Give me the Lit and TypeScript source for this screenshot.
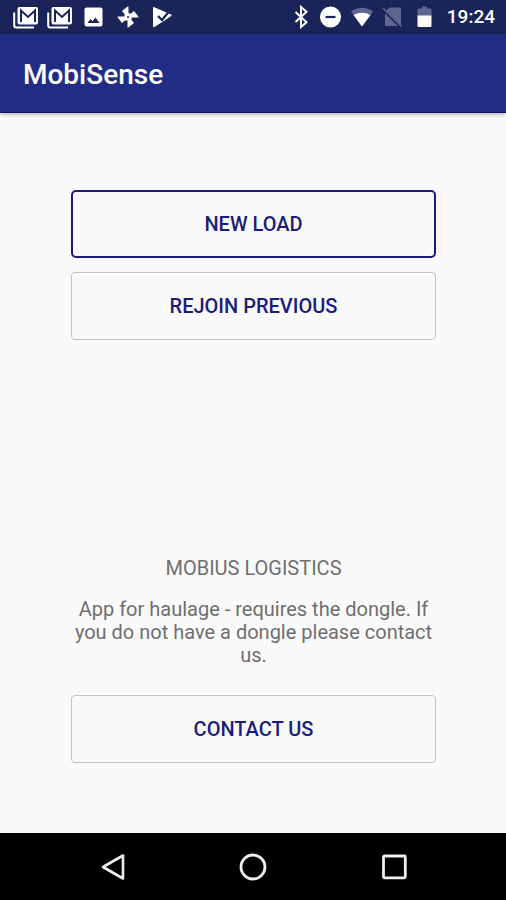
import { LitElement, html, css, svg } from "lit";
import { customElement } from "lit/decorators.js";

const gmailIcon = svg`
  <path d="M1.200 7.500V20.500a2 2 0 0 0 2 2H21" fill="none" stroke="#fff" stroke-width="2"/>
  <rect x="4.500" y="2" width="20.500" height="17.500" rx="2" fill="#fff"/>
  <path d="M8 17V5.500l7 6.500 7-6.500V17" fill="none" stroke="#1b2458" stroke-width="2"/>`;

const blade = "M12.500 12.500V2q0-.800-.800-.400L6.500 5.500q-.500.600 0 1.200L8.500 9V12z";

const icons = {
  image: svg`
    <path fill="#fff" fill-rule="evenodd" d="M4.500 2.500h14a2 2 0 0 1 2 2v15a2 2 0 0 1-2 2h-14a2 2 0 0 1-2-2v-15a2 2 0 0 1 2-2zM5.500 18h12l-4-5.500-3 3.700-2-2.300z"/>`,
  pinwheel: svg`
    <g fill="#fff">
      <path d=${blade}/>
      <path d=${blade} transform="rotate(90 12 12)"/>
      <path d=${blade} transform="rotate(180 12 12)"/>
      <path d=${blade} transform="rotate(270 12 12)"/>
    </g>
    <circle cx="12" cy="12" r="1" fill="#1b2458"/>`,
  playCheck: svg`
    <path fill="#fff" d="M3 3q0-1.500 1.300-.800L21 9.500q1.300.800 0 1.800L4.500 22Q3 22.500 3 21z"/>
    <path d="M8 11l4 4L19 6.500" fill="none" stroke="#1b2458" stroke-width="2.200"/>`,
  bluetooth: svg`
    <path d="M6.500 7l11 10.200L12 22V2l5.500 4.800L6.500 17" fill="none" stroke="#fff" stroke-width="2"/>`,
  doNotDisturb: svg`
    <circle cx="10.500" cy="12" r="10.500" fill="#fff"/>
    <path d="M5.500 12h10" stroke="#1b2458" stroke-width="2.200"/>`,
  wifi: svg`
    <path d="M0 6.500Q11-1 22 6.500L11 21.500z" fill="#5f6791"/>
    <path d="M2.500 10Q11 5.500 19.500 10L11 21.500z" fill="#fff"/>`,
  noSim: svg`
    <path d="M7.500 2.500H18a1 1 0 0 1 1 1V21H3V7z" fill="#5f6791"/>
    <path d="M0 3.500L20 23.500" stroke="#1b2458" stroke-width="2.500"/>
    <path d="M1 3L19.500 21.500" stroke="#5f6791" stroke-width="1.600"/>`,
  battery: svg`
    <path d="M9 1.500h5v2h3.500a1 1 0 0 1 1 1V11h-14V4.500a1 1 0 0 1 1-1H9z" fill="#5f6791"/>
    <path d="M4.500 10.500h14V21a1 1 0 0 1-1 1h-12a1 1 0 0 1-1-1z" fill="#fff"/>`,
  back: svg`<path d="M26 2.500v23L6 14z" fill="none" stroke="#eee" stroke-width="2.600" stroke-linejoin="round"/>`,
  home: svg`<circle cx="14" cy="14" r="12" fill="none" stroke="#eee" stroke-width="2.800"/>`,
  recents: svg`<rect x="2.500" y="3" width="21.800" height="21.800" rx="1" fill="none" stroke="#eee" stroke-width="2.800"/>`,
};

const small = (shape: unknown) =>
  html`<span class="slot"><svg width="24" height="24" viewBox="0 0 24 24" aria-hidden="true">${shape}</svg></span>`;

const mail = () =>
  html`<span class="slot"><svg width="26" height="24" viewBox="0 0 26 24" aria-hidden="true">${gmailIcon}</svg></span>`;

@customElement("status-bar")
export class StatusBar extends LitElement {
  static styles = css`
    :host {
      display: flex;
      align-items: center;
      justify-content: space-between;
      height: 34px;
      padding: 0 11px 0 9px;
      box-sizing: border-box;
      background: #1b2458;
      color: #fff;
    }
    .group {
      display: flex;
      align-items: center;
    }
    .slot {
      display: flex;
      justify-content: center;
      width: 34px;
    }
    .system .slot {
      width: 31px;
    }
    svg {
      display: block;
    }
    .clock {
      margin-left: 6px;
      font-size: 19px;
      font-weight: 500;
      line-height: 24px;
    }
  `;

  render() {
    return html`
      <div class="group">
        ${mail()} ${mail()} ${small(icons.image)} ${small(icons.pinwheel)} ${small(icons.playCheck)}
      </div>
      <div class="group system">
        ${small(icons.bluetooth)} ${small(icons.doNotDisturb)} ${small(icons.wifi)}
        ${small(icons.noSim)} ${small(icons.battery)}
        <time class="clock">19:24</time>
      </div>
    `;
  }
}

@customElement("nav-bar")
export class NavBar extends LitElement {
  static styles = css`
    :host {
      display: flex;
      justify-content: center;
      height: 67px;
      background: #000;
    }
    button {
      display: flex;
      align-items: center;
      justify-content: center;
      width: 28%;
      padding: 0;
      border: 0;
      background: none;
    }
  `;

  render() {
    const control = (label: string, shape: unknown) => html`
      <button aria-label=${label}>
        <svg width="28" height="28" viewBox="0 0 28 28" aria-hidden="true">${shape}</svg>
      </button>
    `;
    return html`
      ${control("Back", icons.back)} ${control("Home", icons.home)} ${control("Recent apps", icons.recents)}
    `;
  }
}

@customElement("app-root")
export class AppRoot extends LitElement {
  static styles = css`
    :host {
      display: flex;
      flex-direction: column;
      min-height: 100vh;
      background: #fafafa;
      font-family: Roboto, "Liberation Sans", sans-serif;
    }
    .app-bar {
      display: flex;
      align-items: center;
      height: 79px;
      padding: 4px 23px 0;
      box-sizing: border-box;
      background: #212d84;
      border-bottom: 1px solid #0c1464;
      box-shadow: 0 1px 4px rgba(0, 0, 0, 0.35);
      color: #fff;
    }
    h1 {
      margin: 0;
      font-size: 28px;
      font-weight: 500;
      line-height: 32px;
    }
    main {
      display: flex;
      flex: 1;
      flex-direction: column;
      justify-content: space-between;
      padding: 77px 70px 70px 71px;
    }
    .actions {
      display: flex;
      flex-direction: column;
      gap: 14px;
    }
    .action {
      width: 100%;
      height: 68px;
      padding: 0;
      border: 1px solid #c2c2ca;
      border-radius: 4px;
      background: #fafafa;
      color: #1a1c7c;
      font: 500 20px/24px Roboto, "Liberation Sans", sans-serif;
    }
    .primary {
      border: 2px solid #1a1c7c;
      border-radius: 5px;
    }
    .about {
      color: #6f6f6f;
      text-align: center;
      font-size: 20px;
      line-height: 23px;
    }
    h2 {
      margin: 0 0 18px;
      font-size: 20px;
      font-weight: 400;
    }
    p {
      margin: 0 0 28px;
    }
  `;

  render() {
    return html`
      <status-bar></status-bar>
      <header class="app-bar"><h1>MobiSense</h1></header>
      <main>
        <div class="actions">
          <button class="action primary">NEW LOAD</button>
          <button class="action">REJOIN PREVIOUS</button>
        </div>
        <section class="about">
          <h2>MOBIUS LOGISTICS</h2>
          <p>App for haulage - requires the dongle. If you do not have a dongle please contact us.</p>
          <button class="action">CONTACT US</button>
        </section>
      </main>
      <nav-bar></nav-bar>
    `;
  }
}
